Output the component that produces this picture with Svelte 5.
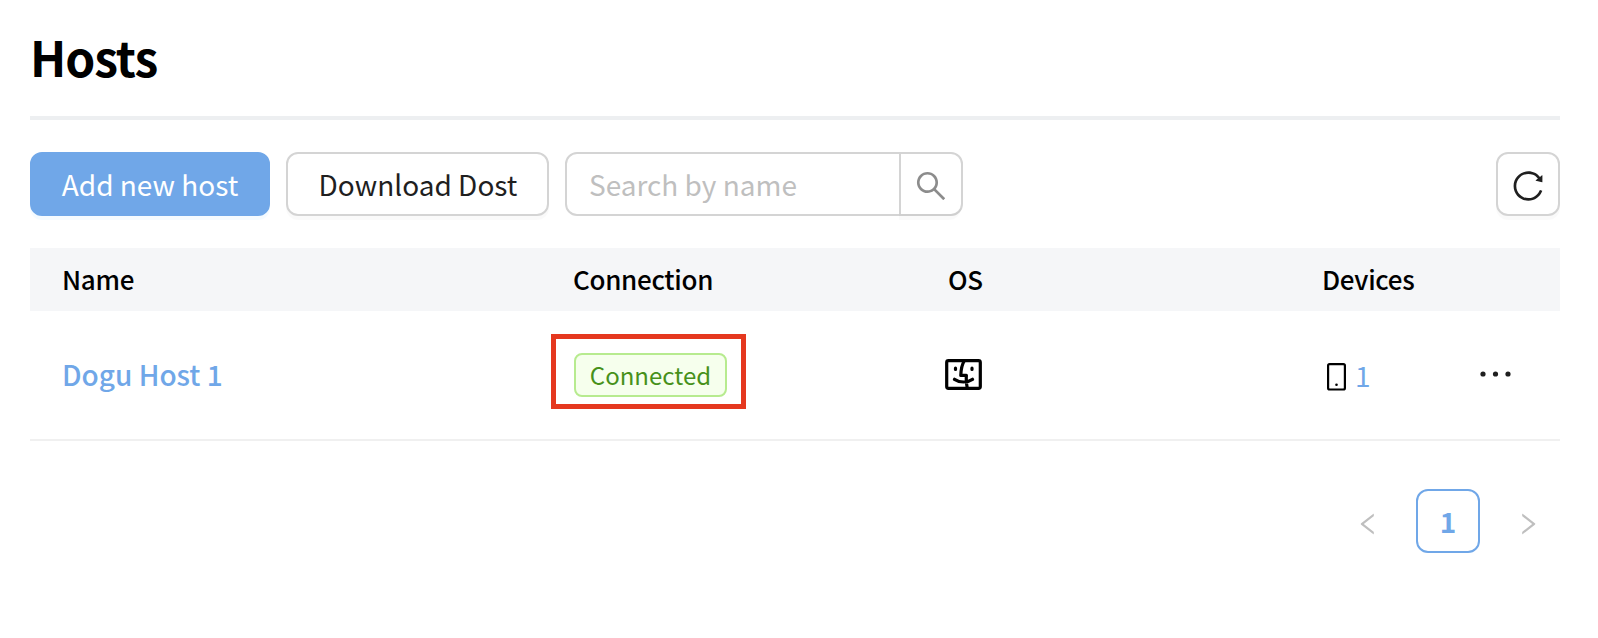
<script>
  const columns = ['Name', 'Connection', 'OS', 'Devices', ''];
  const hosts = [{ name: 'Dogu Host 1', status: 'Connected', devices: 1 }];
</script>

<main>
  <h1>Hosts</h1>

  <div class="toolbar">
    <button class="btn primary">Add new host</button>
    <button class="btn download">Download Dost</button>
    <div class="search">
      <span class="field">Search by name</span>
      <button class="go" aria-label="Search">
        <svg viewBox="0 0 1024 1024" width="36" height="36"><path d="M909.6 854.5L649.9 594.8C690.2 542.7 712 479 712 412c0-80.2-31.3-155.4-87.9-212.1-56.6-56.7-132-87.9-212.1-87.9s-155.5 31.3-212.1 87.9C143.2 256.5 112 331.8 112 412c0 80.1 31.3 155.5 87.9 212.1C256.5 680.8 331.8 712 412 712c67 0 130.6-21.8 182.7-62l259.7 259.6a8.2 8.2 0 0011.6 0l43.6-43.5a8.2 8.2 0 000-11.6zM570.4 570.4C528 612.7 471.8 636 412 636s-116-23.3-158.4-65.6C211.3 528 188 471.8 188 412s23.3-116.1 65.6-158.4C296 211.3 352.2 188 412 188s116.1 23.2 158.4 65.6S636 352.2 636 412s-23.3 116.1-65.6 158.4z" /></svg>
      </button>
    </div>
    <button class="btn reload" aria-label="Refresh">
      <svg viewBox="0 0 1024 1024" width="36" height="36"><path d="M909.1 209.3l-56.4 44.1C775.8 155.1 656.2 92 521.9 92 290 92 102.3 279.5 102 511.5 101.7 743.7 289.8 932 521.9 932c181.3 0 335.8-115 394.6-276.1 1.5-4.2-.7-8.9-4.9-10.3l-56.7-19.5a8 8 0 00-10.1 4.8c-1.8 5-3.8 10-5.9 14.9-17.3 41-42.1 77.8-73.7 109.4A344.77 344.77 0 01655.9 829c-42.3 17.9-87.4 27-133.8 27-46.5 0-91.5-9.1-133.8-27A341.5 341.5 0 01279 755.2a342.16 342.16 0 01-73.7-109.4c-17.9-42.4-27-87.4-27-133.9s9.1-91.5 27-133.9c17.3-41 42.1-77.8 73.7-109.4 31.6-31.6 68.4-56.4 109.3-73.8 42.3-17.9 87.4-27 133.8-27 46.5 0 91.5 9.1 133.8 27a341.5 341.5 0 01109.3 73.8c9.9 9.9 19.2 20.4 27.8 31.4l-60.2 47a8 8 0 003 14.1l175.6 43c5 1.2 9.9-2.6 9.9-7.7l.8-180.9c-.1-6.6-7.8-10.3-13-6.2z" /></svg>
    </button>
  </div>

  <div class="row head">
    {#each columns as column}
      <span>{column}</span>
    {/each}
  </div>
  {#each hosts as host}
    <div class="row body">
      <span class="name">{host.name}</span>
      <span class="status"><span class="tag">{host.status}</span></span>
      <span class="os">
        <svg viewBox="0 0 37 31" width="37" height="31" fill="none" stroke="#000" stroke-width="3.2" stroke-linecap="round" stroke-linejoin="round">
          <rect x="1.7" y="1.7" width="33.6" height="27.6" rx="1.8" />
          <path d="M10.500 9.200v1.200M27 9.200v1.200M19.200 2c-2.200 3.500-3.200 8-3.400 14.400h5.600c-.4 4.600 0 8.400.8 12.400M9.500 20.300c5.500 3.600 12.500 3.600 18 0" />
        </svg>
      </span>
      <span class="devices">
        <svg viewBox="0 0 19 28" width="19" height="28">
          <rect x="1.100" y="1.100" width="16.800" height="25.400" rx="1.500" fill="none" stroke="#000" stroke-width="2.200" />
          <circle cx="9.500" cy="21.700" r="1.300" />
        </svg>
        <span>{host.devices}</span>
      </span>
      <span class="more">
        <svg viewBox="0 0 32 6" width="32" height="6" fill="#1f1f1f"><circle cx="3" cy="3" r="2.600" /><circle cx="15.500" cy="3" r="2.600" /><circle cx="28" cy="3" r="2.600" /></svg>
      </span>
    </div>
  {/each}

  <nav>
    <button class="arrow" aria-label="Previous page">
      <svg viewBox="0 0 1024 1024" width="28" height="28"><path d="M724 218.3V141c0-6.700-7.700-10.400-12.900-6.300L260.300 486.800a31.860 31.860 0 000 50.300l450.800 352.100c5.300 4.100 12.900.4 12.900-6.300v-77.300c0-4.900-2.300-9.600-6.100-12.600l-360-281 360-281.100c3.800-3 6.100-7.700 6.100-12.600z" /></svg>
    </button>
    <button class="page">1</button>
    <button class="arrow next" aria-label="Next page">
      <svg viewBox="0 0 1024 1024" width="28" height="28"><path d="M724 218.3V141c0-6.700-7.700-10.400-12.900-6.300L260.300 486.800a31.860 31.860 0 000 50.300l450.800 352.100c5.300 4.100 12.900.4 12.900-6.300v-77.300c0-4.900-2.300-9.600-6.100-12.600l-360-281 360-281.100c3.800-3 6.100-7.700 6.100-12.600z" /></svg>
    </button>
  </nav>
</main>

<style>
  :global(body) {
    background: #fff;
  }
  main,
  button {
    font-family: 'Noto Sans CJK KR', 'Noto Sans', sans-serif;
    font-size: 28px;
  }
  main {
    box-sizing: border-box;
    height: 638px;
    padding: 0 38px 0 30px;
    color: #000;
    overflow: hidden;
  }
  main * {
    box-sizing: border-box;
  }
  svg {
    display: block;
    flex: none;
  }
  button {
    margin: 0;
    padding: 0;
    border: 0;
    background: none;
  }
  h1 {
    height: 120px;
    margin: 0;
    border-bottom: 4px solid #edeff1;
    font-size: 48px;
    font-weight: 700;
    letter-spacing: -1px;
    line-height: 112px;
  }
  .toolbar {
    display: flex;
    gap: 16px;
    height: 64px;
    margin-top: 32px;
  }
  .btn {
    display: flex;
    align-items: center;
    justify-content: center;
    width: 263px;
    height: 64px;
    border: 2px solid #d4d4d4;
    border-radius: 12px;
    background: #fff;
    box-shadow: 0 4px 0 rgba(0, 0, 0, 0.02);
    color: #1f1f1f;
    line-height: 60px;
  }
  .download {
    padding-left: 1px;
  }
  .primary {
    width: 240px;
    border-color: #70a7e8;
    background: #70a7e8;
    box-shadow: 0 4px 0 rgba(5, 145, 255, 0.04);
    color: #fff;
  }
  .search {
    display: flex;
    width: 398px;
    border: 2px solid #d4d4d4;
    border-radius: 12px;
  }
  .field {
    flex: 1;
    padding-left: 22px;
    color: #bfbfbf;
    line-height: 60px;
  }
  .go {
    display: flex;
    align-items: center;
    justify-content: center;
    width: 62px;
    padding-top: 4px;
    border-left: 2px solid #d4d4d4;
    border-radius: 0 12px 12px 0;
    box-shadow: 0 6px 0 rgba(0, 0, 0, 0.02);
    fill: #8c8c8c;
  }
  .reload {
    width: 64px;
    margin-left: auto;
    padding-top: 4px;
    fill: #1f1f1f;
  }
  .row {
    display: grid;
    grid-template-columns: 511px 375px 374px 158px 1fr;
    align-items: center;
    padding-left: 32px;
  }
  .head {
    height: 63px;
    margin-top: 32px;
    padding-bottom: 2px;
    background: #f5f6f8;
    font-size: 26px;
    font-weight: 500;
    letter-spacing: -0.3px;
  }
  .body {
    height: 130px;
    border-bottom: 2px solid #f0f0f0;
  }
  .name {
    margin-top: -2px;
    color: #70a7e8;
    font-weight: 500;
  }
  .status {
    display: flex;
    align-items: center;
    justify-content: center;
    width: 195px;
    height: 75px;
    margin: -7px 0 0 -22px;
    border: 5px solid #e5381f;
  }
  .tag {
    width: 153px;
    height: 44px;
    margin: 7px 0 0 4px;
    border: 2px solid #b7eb8f;
    border-radius: 8px;
    background: #f6ffed;
    color: #47911b;
    font-size: 24px;
    line-height: 40px;
    text-align: center;
  }
  .os {
    margin: -1px 0 0 -3px;
  }
  .devices {
    display: flex;
    align-items: center;
    gap: 9px;
    padding-left: 5px;
    color: #70a7e8;
  }
  .devices svg {
    margin-top: 4px;
  }
  .more {
    margin-top: -3px;
  }
  nav {
    display: flex;
    justify-content: flex-end;
    gap: 16px;
    margin-top: 48px;
  }
  .arrow {
    display: flex;
    align-items: center;
    justify-content: center;
    width: 64px;
    height: 64px;
    padding-top: 5px;
    fill: #bfbfbf;
  }
  .next svg {
    transform: scaleX(-1);
  }
  .page {
    width: 64px;
    height: 64px;
    border: 2px solid #70a7e8;
    border-radius: 12px;
    color: #70a7e8;
    font-weight: 700;
    line-height: 60px;
  }
</style>
